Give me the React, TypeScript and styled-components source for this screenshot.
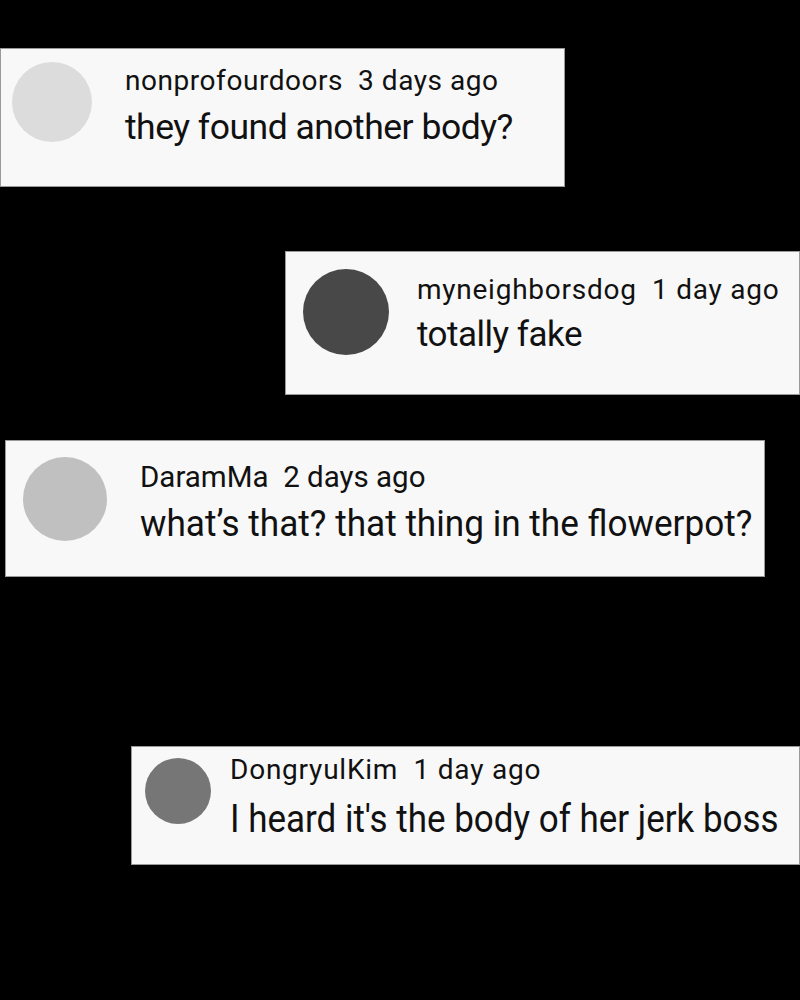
import React from "react";
import styled, { createGlobalStyle } from "styled-components";

const Global = createGlobalStyle`
  html, body { margin: 0; padding: 0; background: #000; }
  body { width: 800px; height: 1000px; overflow: hidden; }
`;

const Page = styled.div`
  width: 800px;
  height: 1000px;
  background: #000;
  display: flex;
  flex-direction: column;
  align-items: flex-start;
  font-family: Roboto, "Noto Sans", sans-serif;
`;

const Card = styled.div<{ $mt: number; $ml: number; $w: number; $h: number; $pl: number; $pt: number; $gap: number }>`
  box-sizing: border-box;
  margin-top: ${(p) => p.$mt}px;
  margin-left: ${(p) => p.$ml}px;
  width: ${(p) => p.$w}px;
  height: ${(p) => p.$h}px;
  background: #f8f8f8;
  border: 1px solid #9a9a9a;
  display: flex;
  align-items: flex-start;
  padding-left: ${(p) => p.$pl}px;
  padding-top: ${(p) => p.$pt}px;
  gap: ${(p) => p.$gap}px;
`;

const Avatar = styled.div<{ $d: number; $c: string }>`
  flex: none;
  width: ${(p) => p.$d}px;
  height: ${(p) => p.$d}px;
  border-radius: 50%;
  background: ${(p) => p.$c};
`;

const Body = styled.div<{ $bt: number }>`
  display: flex;
  flex-direction: column;
  padding-top: ${(p) => p.$bt}px;
  color: #111;
`;

const Meta = styled.div<{ $fs: number; $ls: number; $lh: number }>`
  font-size: ${(p) => p.$fs}px;
  letter-spacing: ${(p) => p.$ls}px;
  line-height: ${(p) => p.$lh}px;
  white-space: pre;
`;

const Text = styled.div<{ $fs: number; $ls: number; $lh: number; $sx: number }>`
  font-size: ${(p) => p.$fs}px;
  letter-spacing: ${(p) => p.$ls}px;
  line-height: ${(p) => p.$lh}px;
  white-space: pre;
  transform: scaleX(${(p) => p.$sx});
  transform-origin: left center;
`;

type C = {
  mt: number; ml: number; w: number; h: number; pl: number; pt: number; gap: number;
  d: number; c: string; bt: number;
  nfs: number; nls: number; nlh: number;
  tfs: number; tls: number; tlh: number; tsx: number;
  meta: string; text: string;
};

const comments: C[] = [
  { mt: 48, ml: 0, w: 565, h: 139, pl: 11, pt: 13, gap: 33, d: 80, c: "#dcdcdc", bt: 1,
    nfs: 28, nls: 0.55, nlh: 36, tfs: 35.5, tls: -0.5, tlh: 56, tsx: 1,
    meta: "nonprofourdoors  3 days ago", text: "they found another body?" },
  { mt: 64, ml: 285, w: 515, h: 144, pl: 17, pt: 17, gap: 28, d: 86, c: "#484848", bt: 3,
    nfs: 28, nls: 0.75, nlh: 36, tfs: 35, tls: -0.5, tlh: 54, tsx: 1,
    meta: "myneighborsdog  1 day ago", text: "totally fake" },
  { mt: 45, ml: 5, w: 760, h: 137, pl: 17, pt: 16, gap: 33, d: 84, c: "#c0c0c0", bt: 2,
    nfs: 29.5, nls: 0, nlh: 36, tfs: 37, tls: 0, tlh: 58, tsx: 0.95,
    meta: "DaramMa  2 days ago", text: "what\u2019s that? that thing in the flowerpot?" },
  { mt: 169, ml: 131, w: 669, h: 119, pl: 13, pt: 11, gap: 19, d: 66, c: "#767676", bt: 0,
    nfs: 28, nls: 0.77, nlh: 24, tfs: 38, tls: 0, tlh: 74, tsx: 0.92,
    meta: "DongryulKim  1 day ago", text: "I heard it's the body of her jerk boss" },
];

export default function App() {
  return (
    <>
      <Global />
      <Page>
        {comments.map((k, i) => (
          <Card key={i} $mt={k.mt} $ml={k.ml} $w={k.w} $h={k.h} $pl={k.pl} $pt={k.pt} $gap={k.gap}>
            <Avatar $d={k.d} $c={k.c} />
            <Body $bt={k.bt}>
              <Meta $fs={k.nfs} $ls={k.nls} $lh={k.nlh}>{k.meta}</Meta>
              <Text $fs={k.tfs} $ls={k.tls} $lh={k.tlh} $sx={k.tsx}>{k.text}</Text>
            </Body>
          </Card>
        ))}
      </Page>
    </>
  );
}
